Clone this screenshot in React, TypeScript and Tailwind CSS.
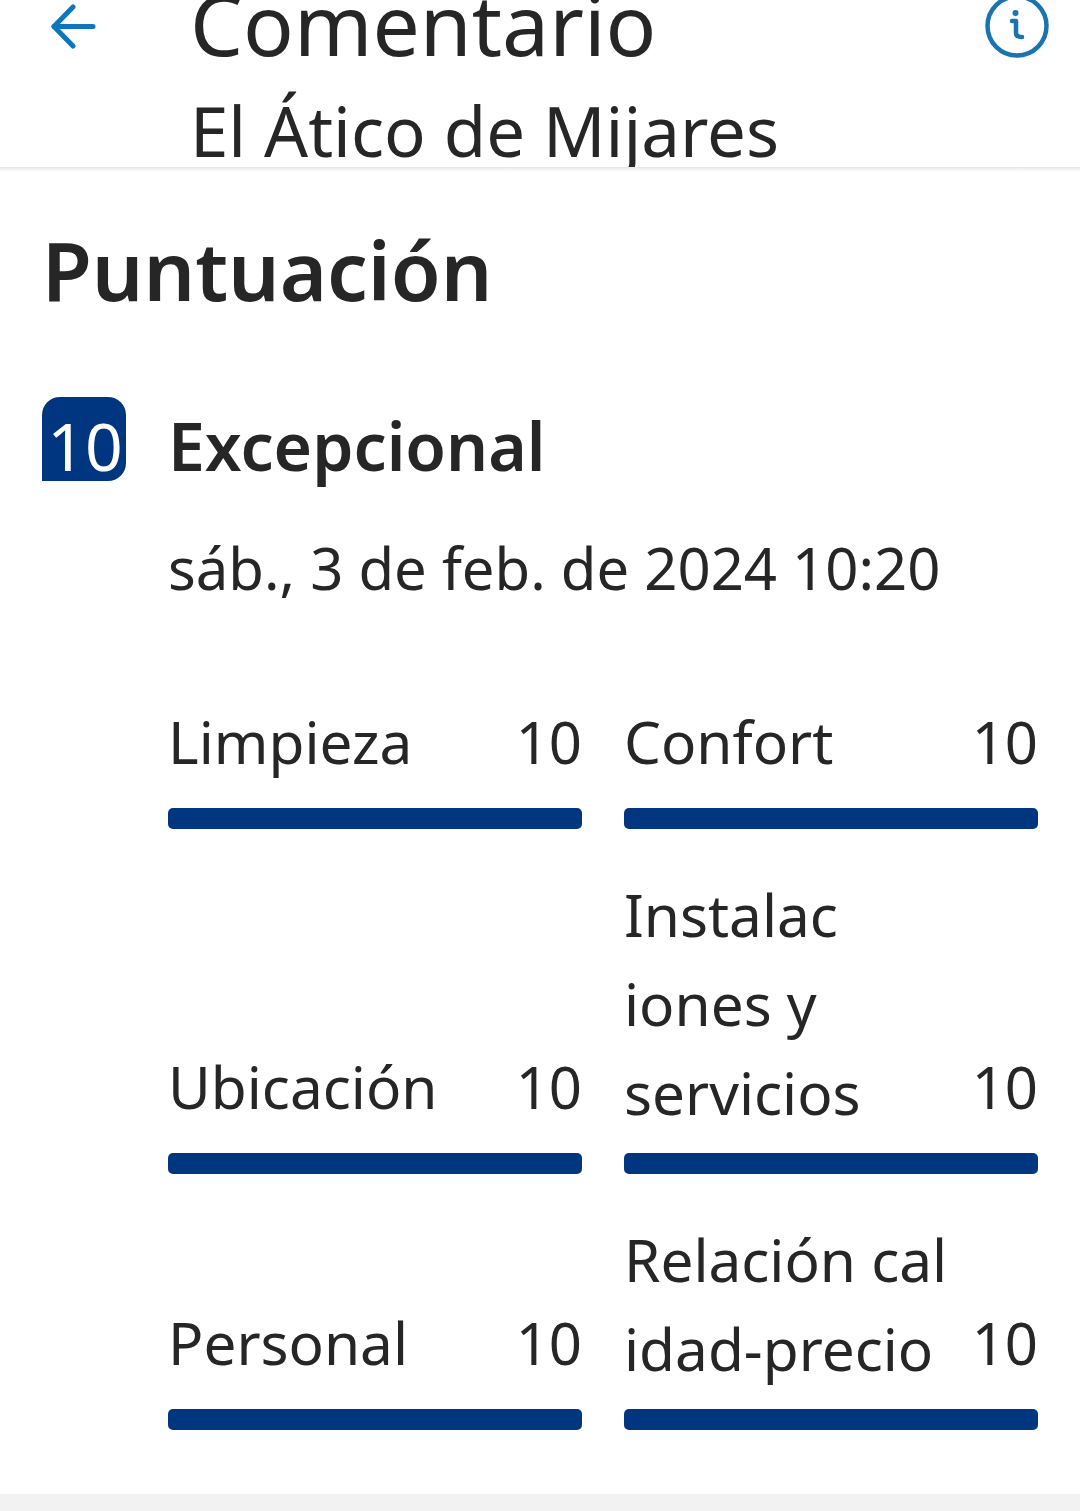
const ratings = [
  { label: "Limpieza", score: 10 },
  { label: "Confort", score: 10 },
  { label: "Ubicación", score: 10 },
  { label: "Instalac\niones y\nservicios", score: 10, wrapped: true },
  { label: "Personal", score: 10 },
  { label: "Relación cal\nidad-precio", score: 10, wrapped: true },
];

function BackIcon() {
  return (
    <svg width="46" height="46" viewBox="0 0 46 46" fill="none" stroke="#0f76bd" strokeWidth="5" strokeLinecap="round" strokeLinejoin="round">
      <path d="M43 22.5H4" />
      <path d="M23 3 4 22.5 23 42" />
    </svg>
  );
}

function InfoIcon() {
  return (
    <svg width="64" height="64" viewBox="0 0 64 64" fill="none" stroke="#1a74b0" strokeWidth="4.5" strokeLinecap="round" strokeLinejoin="round">
      <circle cx="32" cy="32" r="29.5" />
      <circle cx="30.5" cy="19" r="3" fill="#1a74b0" stroke="none" />
      <path d="M27 27h4v12c0 3 2 4 6 4" />
    </svg>
  );
}

export default function App() {
  return (
    <div className="h-[1511px] overflow-hidden bg-white font-['Noto_Sans',sans-serif] text-[#262626]">
      <header className="h-[167px] overflow-hidden">
        <div className="flex items-start">
          <div className="w-[190px] pl-[50px] pt-[4px]">
            <BackIcon />
          </div>
          <div className="flex-1 -mt-[26px]">
            <div className="text-[84px] leading-[100px]">Comentario</div>
            <div className="mt-[6px] text-[69px] leading-[100px]">El Ático de Mijares</div>
          </div>
          <div className="pr-[31px] -mt-[6px]">
            <InfoIcon />
          </div>
        </div>
      </header>
      <div className="h-[5px] bg-gradient-to-b from-[#e8e8e8] to-white" />

      <main className="h-[1322px] px-[42px] pt-[48px]">
        <h1 className="text-[81px] font-semibold leading-[100px]">Puntuación</h1>

        <div className="mt-[77px] flex items-center">
          <div className="flex h-[84px] w-[84px] shrink-0 items-center justify-center rounded-[18px] rounded-bl-none bg-[#003580] pl-[2px] pt-[12px] text-[66px] text-white">
            10
          </div>
          <div className="ml-[42px] mt-[6px] -mb-[6px] text-[66px] font-semibold leading-[84px]">Excepcional</div>
        </div>

        <div className="ml-[126px] mt-[42px] text-[58px] leading-[90px]">sáb., 3 de feb. de 2024 10:20</div>

        <div className="ml-[126px] mt-[84px] grid grid-cols-2 items-end gap-x-[42px]">
          {ratings.map((r) => (
            <div key={r.label} className="mb-[41px]">
              <div className="flex items-end justify-between text-[58.5px] leading-[89px]">
                <span className={r.wrapped ? "whitespace-pre-line" : "whitespace-pre-line pb-[6px]"}>{r.label}</span>
                <span className="pb-[6px] text-[58px]">{r.score}</span>
              </div>
              <div className="mt-[16px] h-[21px] rounded-[5px] bg-[#003580]" />
            </div>
          ))}
        </div>
      </main>

      <div className="h-[17px] bg-[#f2f2f2]" />
    </div>
  );
}
